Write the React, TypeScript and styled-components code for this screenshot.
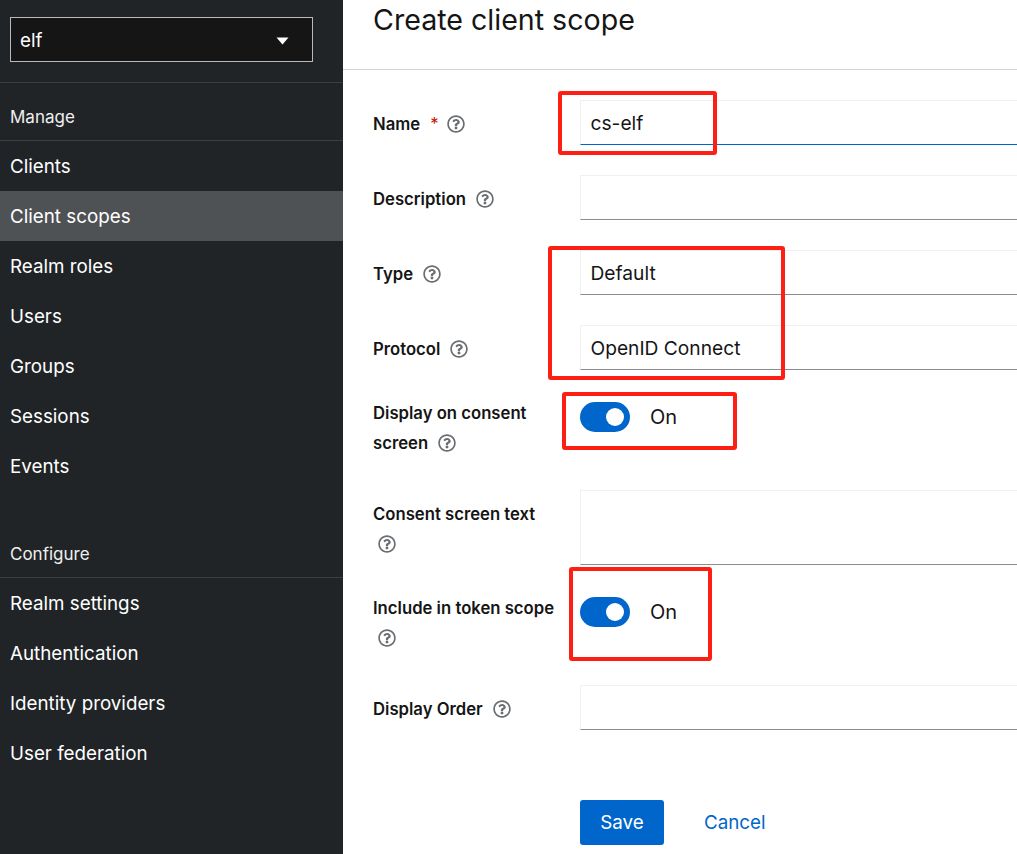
import React from "react";
import styled, { createGlobalStyle } from "styled-components";
import { FaRegQuestionCircle } from "react-icons/fa";

const GlobalStyle = createGlobalStyle`
  html, body {
    margin: 0;
    padding: 0;
    height: 100%;
    overflow: hidden;
    background: #fff;
    font-family: "Inter", "Liberation Sans", sans-serif;
  }
`;

const Page = styled.div`
  display: flex;
  width: 1017px;
  height: 854px;
  overflow: hidden;
`;

const Sidebar = styled.aside`
  flex: 0 0 343px;
  height: 854px;
  background: #212427;
  color: #fff;
  font-size: 18.8px;
`;

const RealmArea = styled.div`
  height: 83px;
  padding: 17px 30px 0 10px;
  box-sizing: border-box;
  border-bottom: 1px solid #3c3f42;
`;

const RealmSelect = styled.div`
  display: flex;
  align-items: center;
  justify-content: space-between;
  height: 45px;
  box-sizing: border-box;
  padding: 2px 23px 0 9px;
  background: #151515;
  border: 1px solid #b8bbbe;
`;

const GroupTitle = styled.div<{ $top: number }>`
  margin-top: ${(p) => p.$top}px;
  height: 46px;
  padding: 0 10px 2px;
  display: flex;
  align-items: center;
  box-sizing: border-box;
  border-bottom: 1px solid #3c3f42;
  font-size: 17px;
  color: #f0f0f0;
`;

const NavItem = styled.div<{ $active?: boolean }>`
  height: 50px;
  display: flex;
  align-items: center;
  padding: 0 10px;
  background: ${(p) => (p.$active ? "#4f5255" : "transparent")};
`;

const Main = styled.main`
  position: relative;
  flex: 1;
  min-width: 0;
  overflow: hidden;
  color: #151515;
`;

const Header = styled.header`
  height: 70px;
  box-sizing: border-box;
  padding: 0 30px;
  border-bottom: 1px solid #d2d2d2;
`;

const Title = styled.h1`
  margin: 0;
  font-size: 28.6px;
  font-weight: 400;
  line-height: 40px;
`;

const Form = styled.form`
  display: grid;
  grid-template-columns: 207px 1fr;
  row-gap: 30px;
  padding: 30px 0 0 30px;
`;

const Label = styled.div<{ $flush?: boolean }>`
  margin: ${(p) => (p.$flush ? "-2px 0 2px" : "0")};
  padding-top: ${(p) => (p.$flush ? 0 : 8.5)}px;
  padding-right: 18px;
  font-size: 16.7px;
  font-weight: 600;
  line-height: 30px;
`;

const Required = styled.span`
  margin-left: 10px;
  margin-right: -2px;
  font-weight: 400;
  color: #c9190b;
`;

const HelpIcon = styled(FaRegQuestionCircle)`
  display: inline-block;
  width: 18px;
  height: 18px;
  margin-left: 10px;
  vertical-align: -3px;
  color: #6a6e73;
`;

const BlockHelp = styled(HelpIcon)`
  margin-left: 5px;
`;

const Field = styled.div<{ $focused?: boolean; $tall?: boolean }>`
  height: ${(p) => (p.$tall ? 75 : 45)}px;
  box-sizing: border-box;
  padding: 1px 10px 0 9.5px;
  display: flex;
  align-items: center;
  font-size: 19.2px;
  border: 1px solid #f0f0f0;
  border-right: 0;
  border-bottom: 1px solid ${(p) => (p.$focused ? "#06c" : "#8a8d90")};
`;

const SwitchRow = styled.div`
  display: flex;
  align-items: center;
  gap: 20px;
  height: 30px;
  margin-top: 2px;
  font-size: 20px;
`;

const SwitchTrack = styled.span`
  display: flex;
  align-items: center;
  justify-content: flex-end;
  width: 50px;
  height: 30px;
  box-sizing: border-box;
  padding-right: 6px;
  border-radius: 15px;
  background: #06c;
`;

const SwitchKnob = styled.span`
  width: 18px;
  height: 18px;
  border-radius: 50%;
  background: #fff;
`;

const Actions = styled.div`
  grid-column: 2;
  display: flex;
  align-items: center;
  gap: 40px;
  margin-top: 40px;
`;

const SaveButton = styled.button`
  width: 84px;
  height: 45px;
  border: 0;
  border-radius: 3px;
  background: #06c;
  color: #fff;
  font: inherit;
  font-size: 18.8px;
`;

const CancelLink = styled.a`
  color: #06c;
  font-size: 18.8px;
`;

const Callout = styled.div<{ $x: number; $y: number; $w: number; $h: number }>`
  position: absolute;
  left: ${(p) => p.$x - 343}px;
  top: ${(p) => p.$y}px;
  width: ${(p) => p.$w}px;
  height: ${(p) => p.$h}px;
  box-sizing: border-box;
  border: 4px solid #fe1f14;
  border-radius: 3px;
`;

const manageItems = ["Clients", "Client scopes", "Realm roles", "Users", "Groups", "Sessions", "Events"];
const configureItems = ["Realm settings", "Authentication", "Identity providers", "User federation"];

const Toggle = () => (
  <SwitchRow>
    <SwitchTrack>
      <SwitchKnob />
    </SwitchTrack>
    On
  </SwitchRow>
);

export default function App() {
  return (
    <Page>
      <GlobalStyle />
      <Sidebar>
        <RealmArea>
          <RealmSelect>
            elf
            <svg width="13" height="8" viewBox="0 0 13 8">
              <polygon points="0.5,0.5 12.5,0.5 6.5,7.5" fill="#fff" />
            </svg>
          </RealmSelect>
        </RealmArea>
        <GroupTitle $top={12}>Manage</GroupTitle>
        {manageItems.map((item) => (
          <NavItem key={item} $active={item === "Client scopes"}>
            {item}
          </NavItem>
        ))}
        <GroupTitle $top={41}>Configure</GroupTitle>
        {configureItems.map((item) => (
          <NavItem key={item}>{item}</NavItem>
        ))}
      </Sidebar>
      <Main>
        <Header>
          <Title>Create client scope</Title>
        </Header>
        <Form>
          <Label>
            Name<Required>*</Required>
            <HelpIcon />
          </Label>
          <Field $focused>cs-elf</Field>

          <Label>
            Description
            <HelpIcon />
          </Label>
          <Field />

          <Label>
            Type
            <HelpIcon />
          </Label>
          <Field>Default</Field>

          <Label>
            Protocol
            <HelpIcon />
          </Label>
          <Field>OpenID Connect</Field>

          <Label $flush>
            Display on consent screen
            <HelpIcon />
          </Label>
          <Toggle />

          <Label>
            Consent screen text
            <br />
            <BlockHelp />
          </Label>
          <Field $tall />

          <Label $flush>
            Include in token scope
            <br />
            <BlockHelp />
          </Label>
          <Toggle />

          <Label>
            Display Order
            <HelpIcon />
          </Label>
          <Field />

          <Actions>
            <SaveButton type="button">Save</SaveButton>
            <CancelLink>Cancel</CancelLink>
          </Actions>
        </Form>
        <Callout $x={558} $y={91} $w={159} $h={64} />
        <Callout $x={548} $y={246} $w={237} $h={134} />
        <Callout $x={562} $y={392} $w={175} $h={58} />
        <Callout $x={569} $y={567} $w={143} $h={94} />
      </Main>
    </Page>
  );
}
